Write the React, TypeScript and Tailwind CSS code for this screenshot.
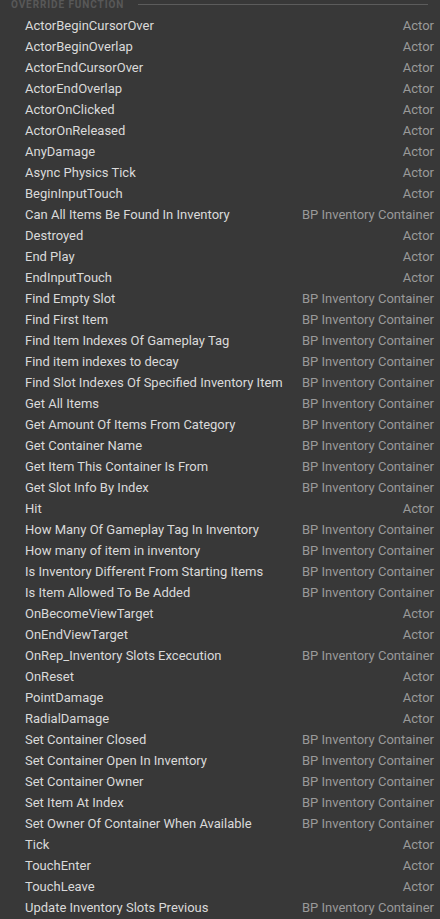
const rows: [string, string][] = [
  ['ActorBeginCursorOver', 'Actor'],
  ['ActorBeginOverlap', 'Actor'],
  ['ActorEndCursorOver', 'Actor'],
  ['ActorEndOverlap', 'Actor'],
  ['ActorOnClicked', 'Actor'],
  ['ActorOnReleased', 'Actor'],
  ['AnyDamage', 'Actor'],
  ['Async Physics Tick', 'Actor'],
  ['BeginInputTouch', 'Actor'],
  ['Can All Items Be Found In Inventory', 'BP Inventory Container'],
  ['Destroyed', 'Actor'],
  ['End Play', 'Actor'],
  ['EndInputTouch', 'Actor'],
  ['Find Empty Slot', 'BP Inventory Container'],
  ['Find First Item', 'BP Inventory Container'],
  ['Find Item Indexes Of Gameplay Tag', 'BP Inventory Container'],
  ['Find item indexes to decay', 'BP Inventory Container'],
  ['Find Slot Indexes Of Specified Inventory Item', 'BP Inventory Container'],
  ['Get All Items', 'BP Inventory Container'],
  ['Get Amount Of Items From Category', 'BP Inventory Container'],
  ['Get Container Name', 'BP Inventory Container'],
  ['Get Item This Container Is From', 'BP Inventory Container'],
  ['Get Slot Info By Index', 'BP Inventory Container'],
  ['Hit', 'Actor'],
  ['How Many Of Gameplay Tag In Inventory', 'BP Inventory Container'],
  ['How many of item in inventory', 'BP Inventory Container'],
  ['Is Inventory Different From Starting Items', 'BP Inventory Container'],
  ['Is Item Allowed To Be Added', 'BP Inventory Container'],
  ['OnBecomeViewTarget', 'Actor'],
  ['OnEndViewTarget', 'Actor'],
  ['OnRep_Inventory Slots Excecution', 'BP Inventory Container'],
  ['OnReset', 'Actor'],
  ['PointDamage', 'Actor'],
  ['RadialDamage', 'Actor'],
  ['Set Container Closed', 'BP Inventory Container'],
  ['Set Container Open In Inventory', 'BP Inventory Container'],
  ['Set Container Owner', 'BP Inventory Container'],
  ['Set Item At Index', 'BP Inventory Container'],
  ['Set Owner Of Container When Available', 'BP Inventory Container'],
  ['Tick', 'Actor'],
  ['TouchEnter', 'Actor'],
  ['TouchLeave', 'Actor'],
  ['Update Inventory Slots Previous', 'BP Inventory Container'],
];

export default function App() {
  return (
    <div className="min-h-[919px] w-[440px] overflow-hidden bg-[#383838] font-['Roboto',sans-serif]">
      {/* section header, scrolled partly out of view */}
      <div className="-mt-[6px] flex h-[21px] items-center pl-[11px] pr-[12px]">
        <span className="text-[10px] font-bold uppercase tracking-[0.09em] text-[#585858]">
          Override Function
        </span>
        <div className="ml-[14px] h-px flex-1 bg-[#5c5c5c]" />
      </div>

      <div className="flex flex-col">
        {rows.map(([name, owner]) => (
          <div key={name} className="flex h-[21px] items-center justify-between pl-[25px] pr-[6px] text-[13px]">
            <span className="text-[#dadada]">{name}</span>
            <span className="text-[#9a9a9a]">{owner}</span>
          </div>
        ))}
      </div>
    </div>
  );
}
